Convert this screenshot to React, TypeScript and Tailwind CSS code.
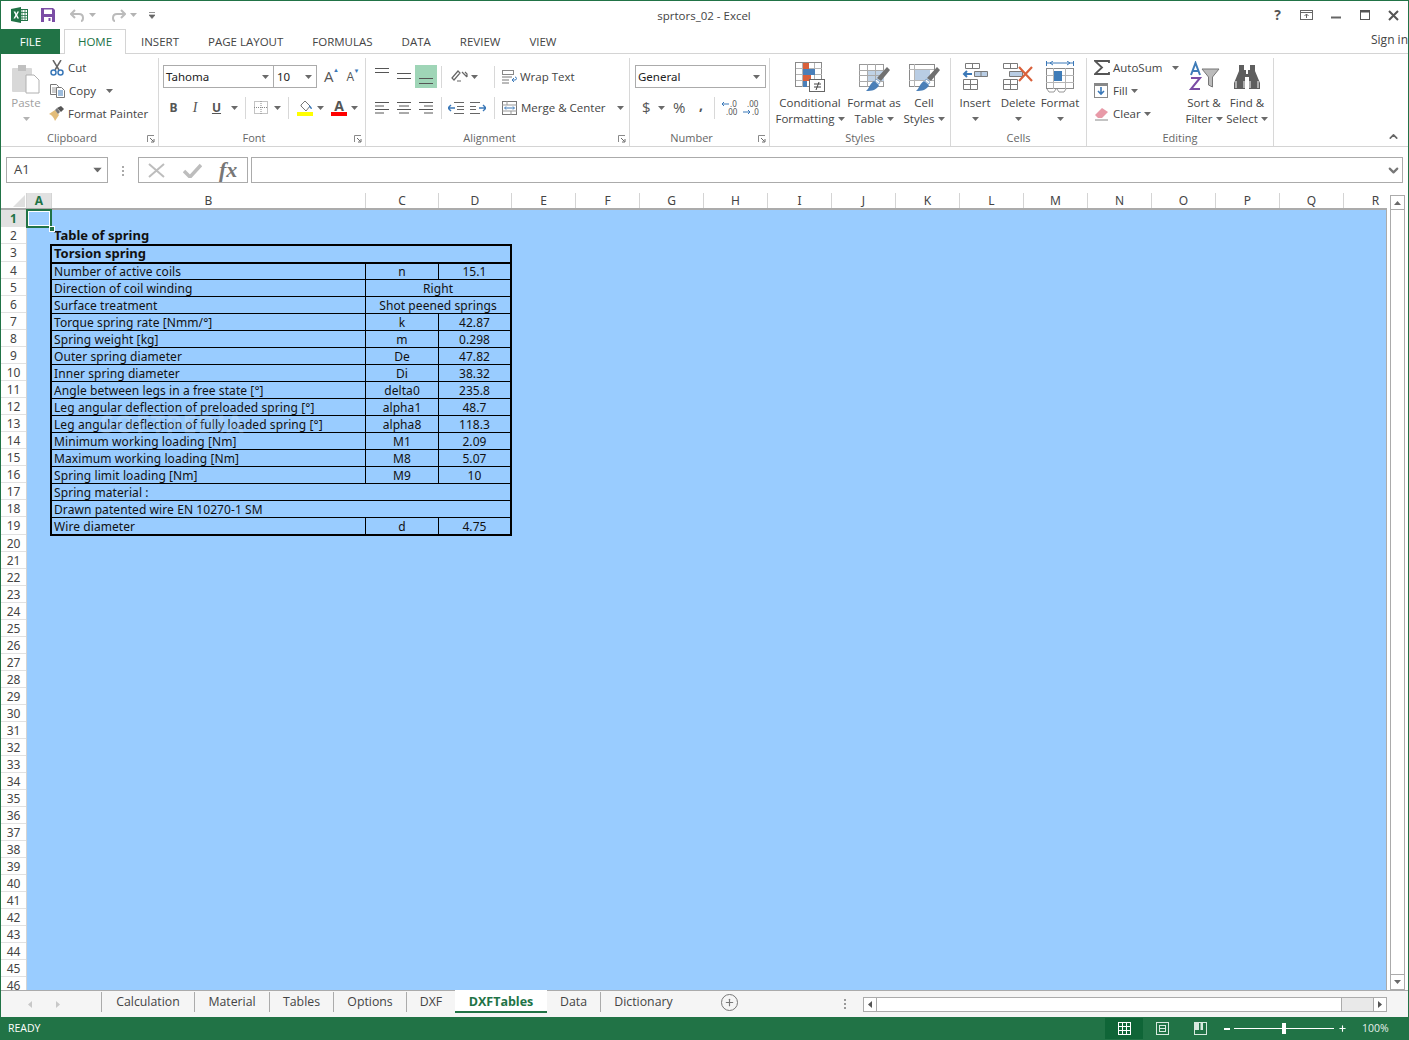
import React from 'react';
import { ChevronDown, ChevronUp, Plus } from 'lucide-react';

const UI = { fontFamily: '"Open Sans", "Noto Sans", sans-serif' };
const CELL = { fontFamily: '"Noto Sans", "DejaVu Sans", sans-serif' };

const Caret = ({ className = '' }: { className?: string }) => (
  <svg width="7" height="4" viewBox="0 0 7 4" className={`shrink-0 ${className}`}>
    <path d="M0 0h7L3.5 4z" fill="#6a6a6a" />
  </svg>
);

const Launcher = () => (
  <svg width="8" height="8" viewBox="0 0 8 8" className="shrink-0">
    <path d="M0.5 7V0.5H7" fill="none" stroke="#8a8a8a" />
    <path d="M3 3l3.500 3.500M7 4v3H4" fill="none" stroke="#6a6a6a" />
  </svg>
);

const Group = ({ label, className, launcher, children }: { label: string; className: string; launcher?: boolean; children: React.ReactNode }) => (
  <div className={`shrink-0 flex flex-col border-r border-[#d8d8d8] h-[88px] mt-[4px] relative ${className}`}>
    <div className="flex-1 min-h-0 flex">{children}</div>
    <div className={`h-[17px] text-[11px] leading-[17px] text-[#666] text-center ${launcher ? 'pr-[16px]' : ''}`}>{label}</div>
    {launcher && (
      <div className="absolute right-[3px] bottom-[3px] flex">
        <Launcher />
      </div>
    )}
  </div>
);

const BigButton = ({ icon, lines, caret, className, last }: { icon: React.ReactNode; lines: string[]; caret?: boolean; className: string; last?: boolean }) => (
  <div className={`flex flex-col items-center shrink-0 leading-[16px] text-[#444] ${className}`}>
    <div className="h-[37px] flex items-center justify-center">{icon}</div>
    {lines.map((l, i) => (
      <div key={l} className="flex items-center gap-[3px] whitespace-nowrap">
        {l}
        {caret && i === lines.length - 1 && <Caret />}
      </div>
    ))}
    {last && <Caret className="mt-[6px]" />}
  </div>
);

const VAlign = ({ ys }: { ys: number[] }) => (
  <svg width="16" height="23" viewBox="0 0 16 23" className="block">
    {ys.map((y) => (
      <path key={y} d={`M1 ${y}.5H15`} stroke="#555" />
    ))}
  </svg>
);

const AlignRows = ({ ax }: { ax: [number, number][] }) => (
  <svg width="16" height="14" viewBox="0 0 16 14">
    {ax.map(([a, b], i) => (
      <path key={i} d={`M${a} ${1.5 + i * 3.5}H${b}`} stroke="#555" />
    ))}
  </svg>
);

const ExcelLogo = () => (
  <svg width="17" height="16" viewBox="0 0 17 16" className="shrink-0">
    <rect x="7.500" y="2.500" width="9" height="11" fill="#fff" stroke="#217346" />
    <path d="M11 2v12M14 2v12M8 5.500h9M8 8.500h9M8 11h9" stroke="#217346" strokeWidth="0.8" />
    <path d="M0 2l10-2v16L0 14z" fill="#217346" />
    <path d="M2.600 4.500h1.800L5.300 6.700 6.300 4.500H8L6.200 8 8 11.500H6.300L5.200 9.200 4.200 11.500H2.500L4.400 8z" fill="#fff" />
  </svg>
);

const SaveIcon = () => (
  <svg width="14" height="14" viewBox="0 0 14 14" className="shrink-0">
    <path d="M0 0h12l2 2v12H0z" fill="#7b4da5" />
    <rect x="3" y="1.500" width="8" height="4.500" fill="#fff" />
    <rect x="3" y="9" width="8" height="5" fill="#fff" />
    <rect x="7.500" y="10" width="2" height="3" fill="#7b4da5" />
  </svg>
);

const ConditionalIcon = () => (
  <svg width="32" height="32" viewBox="0 0 32 32">
    <rect x="1.500" y="1.500" width="26" height="24" fill="#fff" stroke="#8a8a8a" />
    <path d="M8.500 2v24M20.500 2v24M2 7.500h26M2 13.500h26M2 19.500h26" stroke="#b5b5b5" />
    <rect x="9" y="2" width="6" height="6" fill="#d9603b" />
    <rect x="9" y="8" width="12" height="6" fill="#4a7fb8" />
    <rect x="9" y="14" width="8" height="6" fill="#d9603b" />
    <rect x="9" y="20" width="4" height="6" fill="#4a7fb8" />
    <rect x="15.500" y="18.500" width="15" height="12" fill="#fff" stroke="#666" />
    <path d="M20 23h7M20 26h7M25 21l-3 8" stroke="#444" fill="none" />
  </svg>
);

const Brush = () => (
  <g>
    <path d="M29 6l3 3-9 11-4-3z" fill="#707070" />
    <path d="M18 18l4 3-1 2-4-3z" fill="#fff" stroke="#4a7fb8" strokeWidth="0.6" />
    <path d="M16 20l5 4c-2 5-7 6-13 6 3-2 4-8 8-10z" fill="#4a7fb8" />
  </g>
);

const FormatTableIcon = () => (
  <svg width="32" height="32" viewBox="0 0 32 32">
    <rect x="1.500" y="3.500" width="24" height="22" fill="#fff" stroke="#999" />
    <rect x="9" y="9" width="17" height="11" fill="#c0d2e6" />
    <path d="M9.500 3v23M17.500 3v23M1 9.500h25M1 14.500h25M1 20.500h25" stroke="#aaa" />
    <Brush />
  </svg>
);

const CellStylesIcon = () => (
  <svg width="32" height="32" viewBox="0 0 32 32">
    <rect x="1.500" y="3.500" width="25" height="22" fill="#fff" stroke="#8a8a8a" />
    <path d="M6.500 3v23M1 8.500h25M1 19.500h25" stroke="#b5b5b5" />
    <rect x="7" y="9" width="15" height="10" fill="#b9cde4" />
    <Brush />
  </svg>
);

const InsertIcon = () => (
  <svg width="28" height="30" viewBox="0 0 28 30">
    <path d="M4.500 1.500h14v5h-14zM11.500 1.500v5" fill="#fff" stroke="#7a7a7a" />
    <path d="M13.500 9.500h13v5h-13zM20 9.500v5" fill="#b9cde4" stroke="#7a7a7a" />
    <path d="M3 12h8M6 9l-3 3 3 3" fill="none" stroke="#3a78b8" strokeWidth="2" />
    <path d="M2.500 17.500h14v10h-14zM9.500 17.500v10M2.500 22.500h14" fill="#fff" stroke="#7a7a7a" />
  </svg>
);

const DeleteIcon = () => (
  <svg width="32" height="30" viewBox="0 0 32 30">
    <path d="M1.500 1.500h14v5h-14zM8.500 1.500v5" fill="#fff" stroke="#7a7a7a" />
    <path d="M7.500 9.500h13v5h-13z" fill="#b9cde4" stroke="#7a7a7a" />
    <path d="M1.500 17.500h14v10h-14zM8.500 17.500v10M1.500 22.500h14" fill="#fff" stroke="#7a7a7a" />
    <path d="M17 5l13 14M30 5L17 19" stroke="#d9603b" strokeWidth="2.200" />
  </svg>
);

const FormatIcon = () => (
  <svg width="30" height="32" viewBox="0 0 30 32">
    <path d="M2 2h26M1.500 0v5M28.500 0v5M5 2l3-2M5 2l3 2M25 2l-3-2M25 2l-3 2" fill="none" stroke="#3a78b8" />
    <rect x="1.500" y="7.500" width="27" height="20" fill="#fff" stroke="#8a8a8a" />
    <path d="M8.500 7v21M20.500 7v21M1 14.500h28M1 21.500h28" stroke="#b5b5b5" />
    <rect x="9" y="10" width="8" height="10" fill="#3f7cb8" />
    <path d="M2 28l2 3h5l2-3M12 28l2 3h5l2-3" fill="none" stroke="#999" />
  </svg>
);

const SortIcon = () => (
  <svg width="32" height="32" viewBox="0 0 32 32">
    <path d="M3 14L7.500 2 12 14M4.500 10h6" fill="none" stroke="#3f7cb8" strokeWidth="2" />
    <path d="M3 17h9L3 28h9" fill="none" stroke="#7b4da5" strokeWidth="2" />
    <path d="M14 8h17l-6.500 8v10l-4-2v-8z" fill="#bbb" stroke="#777" />
  </svg>
);

const BinocularsIcon = () => (
  <svg width="28" height="26" viewBox="0 0 28 26">
    <path d="M6 1h5v5h2v4h2V6h2V1h5v6l5 12v6h-11V13h-4v12H1v-6l5-12z" fill="#5f5f5f" />
    <path d="M3 17v7M11 17v7M17 17v7M25 17v7" stroke="#fff" />
  </svg>
);

const Titlebar = () => (
  <div className="h-[28px] flex items-center text-[11.5px] text-[#444]">
    <div className="flex items-center w-[160px] shrink-0 pl-[10px]">
      <ExcelLogo />
      <span className="ml-[13px]"><SaveIcon /></span>
      <span className="flex items-center gap-[4px] ml-[15px]">
        <svg width="15" height="13" viewBox="0 0 15 13"><path d="M5 1L1 5l4 4M1 5h8c3 0 4 2 4 4s-1 3-2 3" fill="none" stroke="#bbb" strokeWidth="2" /></svg>
        <Caret className="opacity-50" />
      </span>
      <span className="flex items-center gap-[4px] ml-[15px]">
        <svg width="15" height="13" viewBox="0 0 15 13"><path d="M10 1l4 4-4 4M14 5H6c-3 0-4 2-4 4s1 3 2 3" fill="none" stroke="#bbb" strokeWidth="2" /></svg>
        <Caret className="opacity-50" />
      </span>
      <svg width="6" height="7" viewBox="0 0 6 7" className="ml-[12px]"><path d="M0 .5h6M0 3h6L3 6.500z" stroke="#666" fill="#666" strokeWidth="0.7" /></svg>
    </div>
    <div className="flex-1 text-center ml-[-16px] pt-[1px]">sprtors_02 - Excel</div>
    <div className="flex items-center w-[145px] shrink-0 justify-end text-[#555]">
      <span className="w-[29px] text-center font-bold text-[14px] leading-none">?</span>
      <span className="w-[29px] flex justify-center">
        <svg width="13" height="10" viewBox="0 0 13 10"><rect x="0.500" y="0.500" width="12" height="9" fill="none" stroke="#666" /><path d="M0 2.500h13M6.500 8V4M4.500 6l2-2 2 2" fill="none" stroke="#666" /></svg>
      </span>
      <span className="w-[29px] flex justify-center">
        <svg width="10" height="10" viewBox="0 0 10 10"><path d="M0 7.500h10" stroke="#666" strokeWidth="2" /></svg>
      </span>
      <span className="w-[29px] flex justify-center">
        <svg width="10" height="10" viewBox="0 0 10 10"><rect x="0.500" y="0.500" width="9" height="9" fill="none" stroke="#555" /><path d="M0 1.500h10" stroke="#555" strokeWidth="2" /></svg>
      </span>
      <span className="w-[29px] flex justify-center">
        <svg width="11" height="11" viewBox="0 0 11 11"><path d="M1 1l9 9M10 1l-9 9" stroke="#555" strokeWidth="2" /></svg>
      </span>
    </div>
  </div>
);

const TabRow = () => (
  <div className="h-[25px] flex border-b border-[#d4d4d4] text-[11.5px] text-[#444]">
    <div className="w-[59px] h-[25px] bg-[#217346] text-white flex items-center justify-center">FILE</div>
    <div className="ml-[4px] w-[62px] h-[25px] bg-white border border-b-0 border-[#d4d4d4] text-[#217346] flex items-center justify-center">HOME</div>
    <div className="flex-1 flex items-center pt-[1px]">
      <span className="ml-[15px]">INSERT</span>
      <span className="ml-[29px]">PAGE LAYOUT</span>
      <span className="ml-[29px]">FORMULAS</span>
      <span className="ml-[29px]">DATA</span>
      <span className="ml-[29px]">REVIEW</span>
      <span className="ml-[29px]">VIEW</span>
    </div>
    <div className="whitespace-nowrap pb-[3px] flex items-center text-[12px]">Sign in</div>
  </div>
);

const Sep = ({ className = '' }: { className?: string }) => <div className={`w-px h-[22px] bg-[#d8d8d8] shrink-0 ${className}`} />;

const Ribbon = () => (
  <div className="h-[93px] flex border-b border-[#d4d4d4] relative text-[11.5px] text-[#444] pl-[1px]">
    <Group label="Clipboard" className="w-[157px]" launcher>
      <div className="w-[48px] shrink-0 flex flex-col items-center pt-[6px] text-[#a0a0a0]">
        <svg width="30" height="30" viewBox="0 0 30 30">
          <rect x="1" y="4" width="20" height="24" rx="1" fill="#d8d8d8" />
          <rect x="7" y="1" width="8" height="6" fill="#c0c0c0" />
          <path d="M15 11h8l5 5v13H15z" fill="#fff" stroke="#b0b0b0" />
        </svg>
        <div className="leading-[16px] mt-[1px]">Paste</div>
        <Caret className="mt-[6px] opacity-50" />
      </div>
      <div className="flex flex-col -mt-[2px]">
        <div className="h-[23px] flex items-center gap-[4px]">
          <svg width="14" height="16" viewBox="0 0 14 16"><path d="M3 0l6 10M11 0L5 10" stroke="#666" strokeWidth="1.500" /><circle cx="3.500" cy="12.500" r="2.500" fill="none" stroke="#3a78b8" strokeWidth="1.500" /><circle cx="10.500" cy="12.500" r="2.500" fill="none" stroke="#3a78b8" strokeWidth="1.500" /></svg>
          Cut
        </div>
        <div className="h-[23px] flex items-center gap-[4px]">
          <svg width="15" height="14" viewBox="0 0 15 14"><path d="M.5.500h6l2 2v8H.5z" fill="#fff" stroke="#777" /><path d="M2 4h4M2 6h4M2 8h4" stroke="#999" /><path d="M6.500 3.500h5l3 3v7h-8z" fill="#fff" stroke="#777" /><path d="M8 7h5M8 9h5M8 11h5" stroke="#3a78b8" /></svg>
          Copy <Caret className="ml-[6px]" />
        </div>
        <div className="h-[23px] flex items-center gap-[3px]">
          <svg width="16" height="15" viewBox="0 0 16 15" className="ml-[-1px]"><path d="M0 8l6-4 4 5-4 6c-1-3-3-6-6-7z" fill="#e3bd7a" /><path d="M6 4l2-2 3 4-2 2z" fill="#777" /><path d="M8 2l4-2 3 3-3 3z" fill="#555" /></svg>
          Format Painter
        </div>
      </div>
    </Group>

    <Group label="Font" className="w-[207px]" launcher>
      <div className="flex flex-col pl-[4px] pt-[7px]">
        <div className="flex items-center h-[23px]">
          <div className="w-[111px] h-[23px] border border-[#ababab] flex items-center justify-between pl-[2px] pr-[4px] text-[11.5px] text-[#222]" style={CELL}>Tahoma <Caret /></div>
          <div className="w-[43px] h-[23px] border border-l-0 border-[#ababab] flex items-center justify-between pl-[3px] pr-[4px] text-[11.5px] text-[#222]" style={CELL}>10 <Caret /></div>
          <span className="ml-[7px] text-[15px] text-[#555] leading-none relative">A<span className="absolute left-[9px] top-[-2px] text-[6px] text-[#3a78b8]">▲</span></span>
          <span className="ml-[13px] text-[12px] text-[#555] leading-none relative">A<span className="absolute left-[7px] top-[-3px] text-[6px] text-[#3a78b8]">▼</span></span>
        </div>
        <div className="flex items-center h-[23px] mt-[8px] text-[#555] text-[12px]">
          <span className="font-bold w-[21px] text-center" style={CELL}>B</span>
          <span className="italic w-[22px] text-center" style={{ fontFamily: '"Liberation Serif", serif', fontSize: 14 }}>I</span>
          <span className="underline font-bold w-[21px] text-center" style={CELL}>U</span>
          <Caret className="ml-[4px]" />
          <Sep className="ml-[7px]" />
          <span className="ml-[8px]">
            <svg width="14" height="13" viewBox="0 0 14 13" className="block"><rect x="0.500" y="0.500" width="13" height="12" fill="none" stroke="#888" strokeDasharray="1 1" /><path d="M7 0v13M0 6.500h14" stroke="#888" strokeDasharray="1 1" /></svg>
          </span>
          <Caret className="ml-[6px]" />
          <Sep className="ml-[7px]" />
          <div className="ml-[8px] flex flex-col items-center w-[16px]">
            <svg width="16" height="12" viewBox="0 0 16 12"><path d="M4 5l4-4 5 5-4 5-5-5z" fill="#fff" stroke="#777" /><path d="M12 5c2 1 3 3 3 4-2 0-3-2-3-4z" fill="#3a78b8" /></svg>
            <div className="h-[4px] w-[16px] bg-[#ffff00]" />
          </div>
          <Caret className="ml-[4px]" />
          <div className="ml-[7px] flex flex-col items-center w-[16px]">
            <span className="font-bold text-[14px] leading-[12px] text-[#555]">A</span>
            <div className="h-[4px] w-[16px] bg-[#ff0000]" />
          </div>
          <Caret className="ml-[4px]" />
        </div>
      </div>
    </Group>

    <Group label="Alignment" className="w-[264px]" launcher>
      <div className="flex flex-col pl-[5px] pt-[7px]">
        <div className="flex items-center h-[23px]">
          <div className="w-[22px] flex justify-center"><VAlign ys={[3, 7]} /></div>
          <div className="w-[22px] flex justify-center"><VAlign ys={[8, 13]} /></div>
          <div className="w-[22px] h-[23px] bg-[#9fd5b7] flex justify-center"><VAlign ys={[13, 18]} /></div>
          <Sep className="ml-[4px]" />
          <div className="ml-[9px] flex items-center gap-[3px]">
            <svg width="17" height="15" viewBox="0 0 17 15"><path d="M1 9l6-7 2 2-6 7zM6 12h4M11 3l5 5M14 3l2 2v3" fill="none" stroke="#666" strokeWidth="1.200" /></svg>
            <Caret />
          </div>
          <Sep className="ml-[16px]" />
          <div className="ml-[7px] flex items-center gap-[3px] whitespace-nowrap">
            <svg width="15" height="14" viewBox="0 0 15 14"><rect x="0.500" y="0.500" width="11" height="4" fill="none" stroke="#888" /><path d="M0 7h10M0 10h7M0 13h7" stroke="#777" /><path d="M10 10h3c2 0 2-3 0-3M12 8l-2 2 2 2" fill="none" stroke="#3a78b8" /></svg>
            Wrap Text
          </div>
        </div>
        <div className="flex items-center h-[23px] mt-[8px]">
          <div className="w-[22px] flex justify-center"><AlignRows ax={[[1, 15], [1, 10], [1, 15], [1, 10]]} /></div>
          <div className="w-[22px] flex justify-center"><AlignRows ax={[[1, 15], [3, 13], [1, 15], [3, 13]]} /></div>
          <div className="w-[22px] flex justify-center"><AlignRows ax={[[1, 15], [6, 15], [1, 15], [6, 15]]} /></div>
          <Sep className="ml-[4px]" />
          <div className="ml-[3px] w-[22px] flex justify-center">
            <svg width="16" height="14" viewBox="0 0 16 14"><path d="M6 1.500h10M9 5.500h7M9 8.500h7M6 12.500h10" stroke="#666" /><path d="M0 7h7M3 4L0 7l3 3" fill="none" stroke="#3a78b8" strokeWidth="1.400" /></svg>
          </div>
          <div className="w-[22px] flex justify-center">
            <svg width="16" height="14" viewBox="0 0 16 14"><path d="M0 1.500h10M0 5.500h6M0 8.500h6M0 12.500h10" stroke="#666" /><path d="M9 7h7M13 4l3 3-3 3" fill="none" stroke="#3a78b8" strokeWidth="1.400" /></svg>
          </div>
          <Sep className="ml-[5px]" />
          <div className="ml-[7px] flex items-center gap-[3px] whitespace-nowrap">
            <svg width="16" height="14" viewBox="0 0 16 14"><rect x="0.500" y="0.500" width="14" height="13" fill="none" stroke="#777" /><path d="M0 4h15M0 10h15M5 0v4M9 10v4" stroke="#999" /><path d="M3 7h9M4 5.500L2.500 7 4 8.500M11 5.500L12.500 7 11 8.500" fill="none" stroke="#3a78b8" /></svg>
            Merge &amp; Center <Caret className="ml-[8px]" />
          </div>
        </div>
      </div>
    </Group>

    <Group label="Number" className="w-[140px]" launcher>
      <div className="flex flex-col pl-[5px] pt-[7px]">
        <div className="w-[131px] h-[23px] border border-[#ababab] flex items-center justify-between pl-[2px] pr-[5px] text-[11.5px] text-[#222]" style={CELL}>General <Caret /></div>
        <div className="flex items-center h-[23px] mt-[8px] text-[#555]">
          <span className="text-[15px] ml-[7px] leading-none w-[9px]">$</span>
          <Caret className="ml-[7px]" />
          <span className="text-[15px] ml-[8px] leading-none w-[14px]">%</span>
          <span className="ml-[12px] font-bold text-[14px] leading-none mt-[-6px] w-[6px]">,</span>
          <Sep className="ml-[9px]" />
          <div className="ml-[6px] relative w-[19px] h-[16px] text-[8px] leading-[8px] text-[#555]" style={CELL}>
            <svg width="8" height="6" viewBox="0 0 8 6" className="absolute left-0 top-[1px]"><path d="M8 3H1M3 1L1 3l2 2" fill="none" stroke="#3a78b8" /></svg>
            <div className="pl-[9px]">.0</div>
            <div className="pl-[5px]">.00</div>
          </div>
          <div className="ml-[3px] relative w-[17px] h-[16px] text-[8px] leading-[8px] text-[#555]" style={CELL}>
            <div className="pl-[4px]">.00</div>
            <svg width="8" height="6" viewBox="0 0 8 6" className="absolute left-0 top-[9px]"><path d="M0 3h7M5 1l2 2-2 2" fill="none" stroke="#3a78b8" /></svg>
            <div className="pl-[9px]">.0</div>
          </div>
        </div>
      </div>
    </Group>

    <Group label="Styles" className="w-[181px]">
      <BigButton className="w-[80px]" icon={<ConditionalIcon />} lines={['Conditional', 'Formatting']} caret />
      <BigButton className="w-[48px]" icon={<FormatTableIcon />} lines={['Format as', 'Table']} caret />
      <BigButton className="w-[52px]" icon={<CellStylesIcon />} lines={['Cell', 'Styles']} caret />
    </Group>

    <Group label="Cells" className="w-[136px]">
      <BigButton className="w-[48px]" icon={<InsertIcon />} lines={['Insert']} last />
      <BigButton className="w-[38px]" icon={<DeleteIcon />} lines={['Delete']} last />
      <BigButton className="w-[46px]" icon={<FormatIcon />} lines={['Format']} last />
    </Group>

    <Group label="Editing" className="w-[187px]">
      <div className="w-[94px] shrink-0 flex flex-col pl-[7px] -mt-[2px]">
        <div className="h-[23px] flex items-center gap-[3px]">
          <svg width="16" height="15" viewBox="0 0 16 15"><path d="M15 3V1H1l7 6.500L1 14h14v-2" fill="none" stroke="#555" strokeWidth="1.800" /></svg>
          AutoSum <Caret className="ml-[7px]" />
        </div>
        <div className="h-[23px] flex items-center gap-[5px]">
          <svg width="14" height="15" viewBox="0 0 14 15"><rect x="0.500" y="0.500" width="13" height="14" fill="#fff" stroke="#888" /><path d="M1 1h12v2H1z" fill="#888" /><path d="M7 4v7M4 8l3 3 3-3" fill="none" stroke="#3a78b8" strokeWidth="1.600" /></svg>
          Fill <Caret className="ml-[-2px]" />
        </div>
        <div className="h-[23px] flex items-center gap-[4px]">
          <svg width="15" height="14" viewBox="0 0 15 14"><path d="M1 8l7-7 6 4-6 6H4z" fill="#e89aa8" /><path d="M1 13h13" stroke="#888" /></svg>
          Clear <Caret className="ml-[-1px]" />
        </div>
      </div>
      <BigButton className="w-[46px]" icon={<SortIcon />} lines={['Sort &', 'Filter']} caret />
      <BigButton className="w-[40px]" icon={<BinocularsIcon />} lines={['Find &', 'Select']} caret />
    </Group>

    <ChevronUp className="absolute right-[8px] bottom-[3px] text-[#666]" size={13} strokeWidth={3} />
  </div>
);

const FormulaBar = () => (
  <div className="h-[46px] flex items-start pt-[10px] pl-[5px] pr-[5px] text-[#444]">
    <div className="w-[102px] h-[26px] bg-white border border-[#ababab] flex items-center justify-between pl-[7px] pr-[6px] text-[13px]">
      A1 <Caret className="scale-125" />
    </div>
    <div className="w-[30px] flex flex-col items-center gap-[2px] pt-[9px]">
      <span className="w-[2px] h-[2px] bg-[#aaa]" />
      <span className="w-[2px] h-[2px] bg-[#aaa]" />
      <span className="w-[2px] h-[2px] bg-[#aaa]" />
    </div>
    <div className="w-[110px] h-[26px] border border-[#ababab] flex items-center pl-[9px] gap-[18px]">
      <svg width="17" height="15" viewBox="0 0 17 15"><path d="M1 1l15 13M16 1L1 14" stroke="#bdbdbd" strokeWidth="2" /></svg>
      <svg width="19" height="15" viewBox="0 0 19 15"><path d="M1 8l6 6L18 2" fill="none" stroke="#bdbdbd" strokeWidth="3.500" /></svg>
      <span className="italic font-bold text-[22px] leading-none text-[#777] ml-[-1px]" style={{ fontFamily: '"Liberation Serif", serif' }}>fx</span>
    </div>
    <div className="flex-1 h-[26px] ml-[3px] border border-[#ababab] flex items-center justify-end pr-[1px]">
      <ChevronDown size={15} strokeWidth={3.500} className="text-[#777]" />
    </div>
  </div>
);

const cols: [string, string][] = [
  ['A', 'w-[25px]'], ['B', 'w-[314px]'], ['C', 'w-[73px]'], ['D', 'w-[73px]'],
  ...'EFGHIJKLMNOPQR'.split('').map((c): [string, string] => [c, 'w-[64px]']),
];

const ColHeaders = () => (
  <div className="h-[17px] flex border-b-2 border-[#ababab] overflow-hidden" style={CELL}>
    <div className="w-[26px] shrink-0 relative border-r border-[#d4d4d4]">
      <svg width="12" height="12" viewBox="0 0 12 12" className="absolute right-[1px] bottom-[1px]"><path d="M12 0v12H0z" fill="#dfdfdf" /></svg>
    </div>
    {cols.map(([c, w]) => (
      <div
        key={c}
        className={`shrink-0 flex items-center justify-center text-[12px] pt-[1px] border-r border-[#d4d4d4] ${w} ${c === 'A' ? 'bg-[#e1e1e1] text-[#217346] font-bold' : 'text-[#444]'}`}
      >
        {c}
      </div>
    ))}
  </div>
);

const rowNums = Array.from({ length: 46 }, (_, i) => i + 1);

const RowHeaders = () => (
  <div className="w-[26px] shrink-0 h-full overflow-hidden border-r border-[#d4d4d4]" style={CELL}>
    {rowNums.map((n) => (
      <div
        key={n}
        className={`flex items-center justify-center text-[12px] pt-[1px] border-b border-[#e1e1e1] ${n === 3 || n === 19 ? 'h-[18px]' : 'h-[17px]'} ${n === 1 ? 'bg-[#e1e1e1] text-[#217346] font-bold' : 'text-[#444]'}`}
      >
        {n}
      </div>
    ))}
  </div>
);

type Row = { label: string; sym?: string; val?: string; merged?: string };
const rows: Row[] = [
  { label: 'Number of active coils', sym: 'n', val: '15.1' },
  { label: 'Direction of coil winding', merged: 'Right' },
  { label: 'Surface treatment', merged: 'Shot peened springs' },
  { label: 'Torque spring rate [Nmm/°]', sym: 'k', val: '42.87' },
  { label: 'Spring weight [kg]', sym: 'm', val: '0.298' },
  { label: 'Outer spring diameter', sym: 'De', val: '47.82' },
  { label: 'Inner spring diameter', sym: 'Di', val: '38.32' },
  { label: 'Angle between legs in a free state [°]', sym: 'delta0', val: '235.8' },
  { label: 'Leg angular deflection of preloaded spring [°]', sym: 'alpha1', val: '48.7' },
  { label: 'Leg angular deflection of fully loaded spring [°]', sym: 'alpha8', val: '118.3' },
  { label: 'Minimum working loading [Nm]', sym: 'M1', val: '2.09' },
  { label: 'Maximum working loading [Nm]', sym: 'M8', val: '5.07' },
  { label: 'Spring limit loading [Nm]', sym: 'M9', val: '10' },
  { label: 'Spring material :' },
  { label: 'Drawn patented wire EN 10270-1 SM' },
  { label: 'Wire diameter', sym: 'd', val: '4.75' },
];

const SpringTable = () => (
  <div className="w-[462px] ml-[23px] text-[12px] leading-[16px] text-[#111] tracking-[0.08px]" style={CELL}>
    <div className="h-[17px] pl-[4px] font-bold text-[13px] tracking-normal">Table of spring</div>
    <div className="border-2 border-black">
      <div className="h-[16px] pl-[2px] font-bold text-[13px] tracking-normal border-b-2 border-black leading-[15px] box-content">Torsion spring</div>
      {rows.map((r, i) => {
        const pad = i === 0 ? '' : 'pt-[1px]';
        return (
          <div key={r.label} className={`flex ${i === 0 || i === rows.length - 1 ? 'h-[16px]' : 'h-[17px]'} ${i < rows.length - 1 ? 'border-b border-black' : ''}`}>
            <div className={`flex-1 pl-[2px] whitespace-nowrap ${pad}`}>{r.label}</div>
            {r.sym && <div className={`w-[73px] text-center border-l border-black ${pad}`}>{r.sym}</div>}
            {r.sym && <div className={`w-[72px] text-center border-l border-black ${pad}`}>{r.val}</div>}
            {r.merged && <div className={`w-[145px] text-center border-l border-black ${pad}`}>{r.merged}</div>}
          </div>
        );
      })}
    </div>
  </div>
);

const Sheet = () => (
  <div className="flex-1 min-h-0 flex">
    <div className="flex-1 min-w-0 flex flex-col overflow-hidden">
      <ColHeaders />
      <div className="flex-1 min-h-0 flex">
        <RowHeaders />
        <div className="flex-1 min-w-0 bg-[#99ccff] border-r border-[#ababab] relative pt-[17px]">
          <SpringTable />
          {/* selected cell */}
          <div className="absolute left-[-1px] top-[-1px] w-[26px] h-[19px] border-2 border-[#217346] shadow-[inset_0_0_0_1px_#fff]" />
          <div className="absolute left-[22px] top-[16px] w-[4px] h-[4px] bg-[#217346] border border-white box-content" />
          {/* watermark */}
          <div className="absolute left-[73px] top-[195px] text-[25px] font-bold tracking-[1px] text-white opacity-[0.18] pointer-events-none" style={UI}>SOFTPEDIA</div>
        </div>
      </div>
    </div>
    <div className="w-[21px] shrink-0 flex flex-col pl-[3px] pt-[2px]">
      <div className="w-[15px] h-[15px] border border-[#ababab] flex items-center justify-center"><svg width="7" height="4" viewBox="0 0 7 4"><path d="M0 4h7L3.500 0z" fill="#6a6a6a" /></svg></div>
      <div className="w-[15px] flex-1 border-x border-b border-[#ababab]" />
      <div className="w-[15px] h-[15px] border border-t-0 border-[#ababab] flex items-center justify-center"><Caret /></div>
    </div>
  </div>
);

const sheets: [string, string][] = [
  ['Calculation', 'w-[93px]'], ['Material', 'w-[75px]'], ['Tables', 'w-[64px]'], ['Options', 'w-[73px]'],
  ['DXF', 'w-[49px]'], ['DXFTables', 'w-[92px]'], ['Data', 'w-[53px]'], ['Dictionary', 'w-[86px]'],
];

const SheetTabs = () => (
  <div className="h-[27px] bg-[#f5f5f5] border-t border-[#ababab] flex text-[12.3px] text-[#444]">
    <div className="w-[100px] shrink-0 flex items-center pl-[27px] gap-[24px]">
      <svg width="4" height="7" viewBox="0 0 4 7"><path d="M4 0v7L0 3.500z" fill="#c8c8c8" /></svg>
      <svg width="4" height="7" viewBox="0 0 4 7"><path d="M0 0v7l4-3.500z" fill="#c8c8c8" /></svg>
    </div>
    {sheets.map(([s, w]) =>
      s === 'DXFTables' ? (
        <div key={s} className={`h-[23px] -mt-px pt-[3px] bg-white border-b-[2px] border-[#217346] text-[#217346] text-[12.5px] font-bold flex items-center justify-center ${w}`}>{s}</div>
      ) : (
        <div key={s} className={`h-[20px] mt-[1px] pt-[1px] border-l border-[#ababab] last:border-r flex items-center justify-center ${w} ${s === 'Data' ? 'border-l-0' : ''}`}>{s}</div>
      ),
    )}
    <div className="ml-[35px] mt-[3px] w-[17px] h-[17px] rounded-full border border-[#777] flex items-center justify-center shrink-0">
      <Plus size={11} strokeWidth={2.500} className="text-[#777]" />
    </div>
    <div className="flex-1" />
    <div className="w-[571px] shrink-0 flex items-center pr-[21px]">
      <div className="w-[16px] flex flex-col items-center gap-[2px] mr-[10px]">
        <span className="w-[2px] h-[2px] bg-[#999]" />
        <span className="w-[2px] h-[2px] bg-[#999]" />
        <span className="w-[2px] h-[2px] bg-[#999]" />
      </div>
      <div className="flex-1 h-[15px] flex border border-[#ababab] bg-[#e9e9e9]">
        <div className="w-[13px] bg-white border-r border-[#ababab] flex items-center justify-center"><svg width="4" height="7" viewBox="0 0 4 7"><path d="M4 0v7L0 3.500z" fill="#555" /></svg></div>
        <div className="flex-1 bg-white border-r border-[#ababab]" />
        <div className="w-[31px]" />
        <div className="w-[13px] bg-white border-l border-[#ababab] flex items-center justify-center"><svg width="4" height="7" viewBox="0 0 4 7"><path d="M0 0v7l4-3.500z" fill="#555" /></svg></div>
      </div>
    </div>
  </div>
);

const StatusBar = () => (
  <div className="h-[23px] -mx-px bg-[#217346] flex items-center text-white text-[10.5px] pl-[8px]">
    READY
    <div className="flex-1" />
    <div className="w-[38px] h-[21px] bg-[#0f6537] flex items-center justify-center">
      <svg width="13" height="13" viewBox="0 0 13 13"><rect x="0.500" y="0.500" width="12" height="12" fill="none" stroke="#fff" /><path d="M4.500 0v13M8.500 0v13M0 4.500h13M0 8.500h13" stroke="#fff" /></svg>
    </div>
    <div className="w-[38px] flex justify-center">
      <svg width="13" height="13" viewBox="0 0 13 13"><rect x="0.500" y="0.500" width="12" height="12" fill="none" stroke="#d8eadf" /><rect x="3.500" y="3.500" width="6" height="6" fill="none" stroke="#d8eadf" /><path d="M3 6.500h7" stroke="#d8eadf" /></svg>
    </div>
    <div className="w-[38px] flex justify-center">
      <svg width="13" height="13" viewBox="0 0 13 13"><rect x="0.500" y="0.500" width="12" height="12" fill="none" stroke="#d8eadf" /><path d="M0 0h5v8H0zM6.500 0H9v8H6.500z" fill="#d8eadf" /></svg>
    </div>
    <div className="w-[6px] h-[2px] bg-white ml-[5px]" />
    <div className="w-[100px] h-px bg-white ml-[4px] relative">
      <div className="absolute left-[48px] top-[-5px] w-[4px] h-[11px] bg-white" />
    </div>
    <Plus size={9} strokeWidth={3} className="ml-[4px]" />
    <div className="w-[62px] pl-[15px] text-[10.5px] text-[#e5f0e9]">100%</div>
  </div>
);

export default function App() {
  return (
    <div className="w-[1409px] h-[1040px] bg-white border-x border-t border-[#217346] flex flex-col overflow-hidden" style={UI}>
      <Titlebar />
      <TabRow />
      <Ribbon />
      <FormulaBar />
      <Sheet />
      <SheetTabs />
      <StatusBar />
    </div>
  );
}
